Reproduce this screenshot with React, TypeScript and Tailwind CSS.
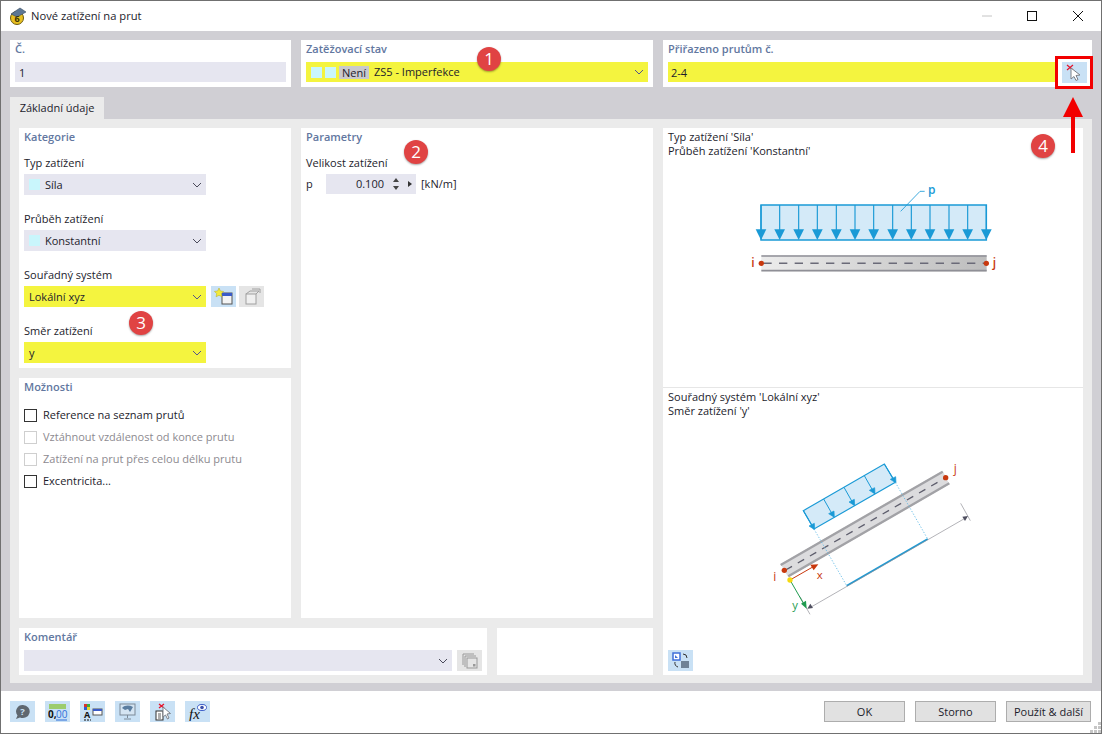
import type { ReactNode } from 'react'

const font = { fontFamily: '"Open Sans", "Noto Sans", sans-serif' }

function Chevron({ color = '#4a4a5a' }: { color?: string }) {
  return (
    <svg width="10" height="6" viewBox="0 0 10 6" className="shrink-0">
      <path d="M1 1l4 4 4-4" fill="none" stroke={color} strokeWidth="1" />
    </svg>
  )
}

function Swatch() {
  return <span className="w-[11px] h-[11px] bg-[#c9f6fc] shrink-0" />
}

function Combo({ text, yellow, swatch }: { text: string; yellow?: boolean; swatch?: boolean }) {
  return (
    <div
      className={`w-[182px] h-[21px] flex items-center pl-[5px] pr-[4px] ${yellow ? 'bg-[#f4f43f]' : 'bg-[#e6e6f0]'}`}
    >
      {swatch && <Swatch />}
      <span className={`flex-1 pt-[1px] text-[#1c1c2c] ${swatch ? 'ml-[5px]' : ''}`}>{text}</span>
      <Chevron color={yellow ? '#55558a' : '#4a4a5a'} />
    </div>
  )
}

function SectionTitle({ children }: { children: ReactNode }) {
  return <div className="h-[18px] leading-[18px] font-semibold text-[#62779f]">{children}</div>
}

function Field({ label, children }: { label: string; children: ReactNode }) {
  return (
    <div className="h-[56px] flex flex-col justify-end">
      <div className="h-[18px] leading-[14px] text-[#1c1c2c]">{label}</div>
      {children}
    </div>
  )
}

function Check({ label, disabled }: { label: string; disabled?: boolean }) {
  return (
    <div className="h-[22px] flex items-center gap-[6px]">
      <span
        className={`w-[13px] h-[13px] border bg-white ${disabled ? 'border-[#cfcfcf]' : 'border-[#333333]'}`}
      />
      <span className={disabled ? 'text-[#8d8a90]' : 'text-[#1c1c2c]'}>{label}</span>
    </div>
  )
}

function IconButton({ children, gray }: { children: ReactNode; gray?: boolean }) {
  return (
    <div
      className={`w-[25px] h-[21px] flex items-center justify-center shrink-0 ${gray ? 'bg-[#e5e5e5]' : 'bg-[#c9e1f5]'}`}
    >
      {children}
    </div>
  )
}

function Cursor({ cross = true }: { cross?: boolean }) {
  return (
    <svg width="19" height="18" viewBox="0 0 19 18">
      {cross && <path d="M2 1l6 5M8 1L2 6" stroke="#e5122a" strokeWidth="1.2" />}
      <path d="M6 4l0 11 3-2.500 2 4 2-1-2-4 4-.5z" fill="#fff" stroke="#7c8088" strokeWidth="1" />
    </svg>
  )
}

function DialogButton({ children, width }: { children: ReactNode; width: string }) {
  return (
    <button className={`${width} h-[21px] bg-[#e1e1e1] border border-[#adadad] text-[#1c1c2c] leading-none`}>
      {children}
    </button>
  )
}

function Badge({ n, className }: { n: number; className: string }) {
  return (
    <div
      className={`absolute w-[24px] h-[24px] rounded-full bg-[#e04343] text-white text-[17px] leading-[24px] text-center shadow-[0_1px_2px_rgba(0,0,0,0.35)] ${className}`}
    >
      {n}
    </div>
  )
}

function LoadDiagram() {
  const xs = [93, 149, 206, 262, 319, 375, 431, 488, 544, 600, 657, 713, 769]
  return (
    <svg width="280" height="110" viewBox="0 0 840 330" className="block">
      <rect x="93" y="75" width="676" height="105" fill="#d4eaf8" stroke="#1a9ad6" strokeWidth="4.500" />
      {xs.map((x) => (
        <g key={x}>
          <path d={`M${x} 75V155`} stroke="#1a9ad6" strokeWidth="3.500" />
          <path d={`M${x - 16} 148h32l-16 32z`} fill="#1a9ad6" />
        </g>
      ))}
      <path d="M512 94l58-60h14" fill="none" stroke="#1a9ad6" strokeWidth="2.500" />
      <text x="594" y="42" fontSize="36" fontWeight="600" fill="#1a9ad6" fontFamily="Open Sans">
        p
      </text>
      <defs>
        <linearGradient id="beam" x1="0" x2="1">
          <stop offset="0" stopColor="#ececec" />
          <stop offset="1" stopColor="#bdbdbd" />
        </linearGradient>
      </defs>
      <rect x="94" y="226" width="676" height="48" fill="url(#beam)" />
      <path d="M94 228H770M94 272H770" stroke="#8f8f96" strokeWidth="5" />
      <path d="M100 250H770" stroke="#6a6a78" strokeWidth="4.500" strokeDasharray="25 22" />
      <circle cx="94" cy="250" r="8" fill="#c8380e" />
      <circle cx="769" cy="250" r="8" fill="#c8380e" />
      <text x="64" y="262" fontSize="36" fontWeight="600" fill="#c8380e" fontFamily="Open Sans">
        i
      </text>
      <text x="788" y="262" fontSize="36" fontWeight="600" fill="#c8380e" fontFamily="Open Sans">
        j
      </text>
    </svg>
  )
}

function AxisDiagram() {
  const dividers: [number, number, number, number][] = [
    [160, 182, 192, 237],
    [221, 147, 251, 200],
    [282, 112, 312, 165],
    [343, 77, 373, 130],
    [403, 42, 436, 97],
  ]
  return (
    <svg width="240" height="180" viewBox="0 0 720 540" className="block">
      <path d="M160 182L403 42 436 97 192 237z" fill="#d4eaf8" stroke="#1a9ad6" strokeWidth="3.500" />
      {dividers.map(([x1, y1, x2, y2]) => (
        <g key={x1}>
          <path d={`M${x1} ${y1}L${x2} ${y2}`} stroke="#1a9ad6" strokeWidth="3" />
          <path d={`M${x2 + 2} ${y2 + 2}l-17-11 16-8z`} fill="#1a9ad6" stroke="#1a9ad6" strokeWidth="2" />
        </g>
      ))}
      <path d="M92 342L578 62 598 103 115 382z" fill="#dcdcde" />
      <path d="M92 345L578 65M115 379L598 100" stroke="#a2a2a6" strokeWidth="7" />
      <path d="M107 360L585 84" stroke="#5d5d6c" strokeWidth="4" strokeDasharray="22 20" />
      <path d="M192 237L290 407M436 97L533 267" stroke="#5cb8e6" strokeWidth="2.500" strokeDasharray="4 5" />
      <path d="M290 407L533 267" stroke="#1a9ad6" strokeWidth="5" />
      <path d="M180 473L650 202" stroke="#8d8d94" strokeWidth="2" />
      <path d="M632 160L661 212M150 440L180 493" stroke="#8d8d94" strokeWidth="2" />
      <path d="M172 476l17-2-8-13zM654 198l-17 2 8 13z" fill="#4f4f60" />
      <path d="M120 390L190 350" stroke="#c8380e" strokeWidth="3" />
      <path d="M205 343l-24 1 10 17z" fill="#c8380e" />
      <path d="M120 390L162 463" stroke="#1f9b4f" strokeWidth="3" />
      <path d="M170 476l-2-24-15 9z" fill="#1f9b4f" />
      <circle cx="103" cy="361" r="8" fill="#c8380e" />
      <circle cx="587" cy="83" r="8" fill="#c8380e" />
      <circle cx="120" cy="390" r="8" fill="#f5d90f" />
      <text x="70" y="393" fontSize="36" fill="#c8380e" fontFamily="Open Sans">i</text>
      <text x="611" y="68" fontSize="36" fill="#c8380e" fontFamily="Open Sans">j</text>
      <text x="200" y="386" fontSize="34" fill="#c8380e" fontFamily="Open Sans">x</text>
      <text x="127" y="478" fontSize="34" fill="#1f9b4f" fontFamily="Open Sans">y</text>
    </svg>
  )
}

export default function App() {
  return (
    <div
      style={font}
      className="relative w-[1102px] h-[734px] flex flex-col bg-white border border-[#707070] text-[11px] overflow-hidden"
    >
      {/* title bar */}
      <div className="h-[30px] flex items-center shrink-0">
        <svg width="18" height="18" viewBox="0 0 18 18" className="ml-[8px]">
          <circle cx="8" cy="11" r="6.500" fill="#e8c021" stroke="#6b5a10" />
          <path d="M2 7l9-6 6 4-9 5z" fill="#5c7796" stroke="#36485e" strokeWidth=".6" />
          <text x="5.500" y="15" fontSize="9" fontWeight="700" fill="#3a3206" fontFamily="Open Sans">6</text>
        </svg>
        <span className="ml-[4px] text-[11.2px] text-[#1c1c2c] flex-1">Nové zatížení na prut</span>
        <svg width="120" height="12" viewBox="0 0 120 12" className="mr-[18px]">
          <path d="M19 6h10" stroke="#c4c4c4" />
          <rect x="64.500" y="1.500" width="9" height="9" fill="none" stroke="#111" />
          <path d="M110 1l10 10M120 1l-10 10" stroke="#111" />
        </svg>
      </div>

      {/* grey working area */}
      <div className="flex-1 bg-[#d0cfd4] px-[9px] pt-[9px] pb-[8px] flex flex-col">
        <div className="flex gap-[10px] h-[47px]">
          <div className="w-[281px] bg-white px-[5px]">
            <SectionTitle>Č.</SectionTitle>
            <div className="mt-[4px] h-[20px] bg-[#e6e6f0] pl-[4px] leading-[21px] text-[#1c1c2c]">1</div>
          </div>
          <div className="w-[352px] bg-white px-[5px]">
            <SectionTitle>Zatěžovací stav</SectionTitle>
            <div className="mt-[4px] h-[20px] bg-[#f4f43f] pl-[5px] pr-[4px] flex items-center text-[#1c1c2c]">
              <Swatch />
              <span className="ml-[3px] flex">
                <Swatch />
              </span>
              <span className="ml-[3px] px-[3px] h-[13px] leading-[13px] bg-[#c9c9cd]">Není</span>
              <span className="ml-[5px] flex-1 pt-[1px]">ZS5 - Imperfekce</span>
              <Chevron color="#55558a" />
            </div>
          </div>
          <div className="w-[429px] bg-white px-[5px]">
            <SectionTitle>Přiřazeno prutům č.</SectionTitle>
            <div className="mt-[4px] h-[21px] flex">
              <div className="w-[387px] h-[20px] bg-[#f4f43f] pl-[3px] leading-[21px] text-[#1c1c2c]">2-4</div>
              <div className="ml-[7px]">
                <IconButton>
                  <Cursor />
                </IconButton>
              </div>
            </div>
          </div>
        </div>

        <div className="mt-[10px] h-[22px] w-[94px] bg-[#ebebeb] flex items-center justify-center text-[#1c1c2c]">
          Základní údaje
        </div>

        <div className="flex-1 bg-[#ebebeb] p-[9px] pb-[8px] flex gap-[10px]">
          <div className="w-[634px] flex flex-col gap-[10px]">
            <div className="flex-1 flex gap-[10px]">
              <div className="w-[272px] flex flex-col gap-[10px]">
                <div className="h-[240px] bg-white px-[5px] pt-0">
                  <SectionTitle>Kategorie</SectionTitle>
                  <div className="-mt-[7px]">
                    <Field label="Typ zatížení">
                      <Combo text="Síla" swatch />
                    </Field>
                    <Field label="Průběh zatížení">
                      <Combo text="Konstantní" swatch />
                    </Field>
                    <Field label="Souřadný systém">
                      <div className="flex">
                        <Combo text="Lokální xyz" yellow />
                        <div className="ml-[5px] flex gap-[3px]">
                          <IconButton>
                            <svg width="20" height="17" viewBox="0 0 20 17">
                              <rect x="8" y="5" width="10" height="11" fill="#f4f4f4" stroke="#555" />
                              <rect x="8" y="5" width="10" height="3" fill="#3a5bc8" />
                              <path d="M5 0l1.400 3 3.200.4-2.300 2.200.6 3.200L5 7.300 2.100 8.800l.6-3.200L.4 3.400 3.600 3z" fill="#f2ea3c" stroke="#b5ad20" strokeWidth=".5" />
                            </svg>
                          </IconButton>
                          <IconButton gray>
                            <svg width="20" height="17" viewBox="0 0 20 17">
                              <rect x="4" y="6" width="10" height="10" fill="#f0f0f0" stroke="#a0a0a0" />
                              <path d="M4 6l4-3h9l-3 3M10 1h8v4" fill="none" stroke="#a0a0a0" />
                            </svg>
                          </IconButton>
                        </div>
                      </div>
                    </Field>
                    <Field label="Směr zatížení">
                      <Combo text="y" yellow />
                    </Field>
                  </div>
                </div>
                <div className="flex-1 bg-white px-[5px]">
                  <SectionTitle>Možnosti</SectionTitle>
                  <div className="mt-[8px]">
                    <Check label="Reference na seznam prutů" />
                    <Check label="Vztáhnout vzdálenost od konce prutu" disabled />
                    <Check label="Zatížení na prut přes celou délku prutu" disabled />
                    <Check label="Excentricita..." />
                  </div>
                </div>
              </div>
              <div className="w-[352px] bg-white px-[5px]">
                <SectionTitle>Parametry</SectionTitle>
                <div className="mt-[9px] h-[16px] leading-[16px] text-[#1c1c2c]">Velikost zatížení</div>
                <div className="mt-[3px] h-[20px] flex items-center text-[#1c1c2c]">
                  <span className="w-[20px]">p</span>
                  <div className="w-[90px] h-[20px] bg-[#e6e6f0] flex items-center justify-end pr-[2px]">
                    <span>0.100</span>
                    <svg width="27" height="14" viewBox="0 0 27 14" className="ml-[3px]">
                      <path d="M6 5l3-4 3 4zM6 9l3 4 3-4z" fill="#444" />
                      <path d="M21 4l4 3-4 3z" fill="#333" />
                    </svg>
                  </div>
                  <span className="ml-[5px]">[kN/m]</span>
                </div>
              </div>
            </div>
            <div className="h-[47px] flex gap-[10px]">
              <div className="w-[468px] bg-white px-[5px]">
                <SectionTitle>Komentář</SectionTitle>
                <div className="mt-[4px] flex gap-[5px]">
                  <div className="w-[428px] h-[21px] bg-[#e6e6f0] flex items-center justify-end pr-[4px]">
                    <Chevron />
                  </div>
                  <IconButton gray>
                    <svg width="16" height="16" viewBox="0 0 16 16">
                      <path d="M1 12V1h11M3 14V3h11" fill="none" stroke="#999" />
                      <rect x="5" y="5" width="10" height="10" fill="#e5e5e5" stroke="#999" />
                      <rect x="11" y="11" width="2.500" height="2.500" fill="#999" />
                    </svg>
                  </IconButton>
                </div>
              </div>
              <div className="w-[156px] bg-white" />
            </div>
          </div>

          <div className="w-[420px] bg-white flex flex-col">
            <div className="h-[260px] border-b border-[#e6e6e6] px-[5px] pt-[2px] leading-[14px] text-[#1c1c2c]">
              <div>Typ zatížení 'Síla'</div>
              <div>Průběh zatížení 'Konstantní'</div>
              <div className="ml-[62px] mt-[22px]">
                <LoadDiagram />
              </div>
            </div>
            <div className="flex-1 px-[5px] pt-[2px] leading-[14px] text-[#1c1c2c] flex flex-col">
              <div>Souřadný systém 'Lokální xyz'</div>
              <div>Směr zatížení 'y'</div>
              <div className="ml-[82px] mt-[32px]">
                <AxisDiagram />
              </div>
              <div className="mt-auto mb-[4px]">
                <IconButton>
                  <svg width="18" height="17" viewBox="0 0 18 17">
                    <rect x="1" y="1" width="7" height="7" fill="#fff" stroke="#3f6fd8" strokeWidth="1.500" />
                    <path d="M3 6V3l2 2 1 1z" fill="#3f6fd8" />
                    <rect x="9" y="9" width="8" height="7" fill="#6f8296" />
                    <path d="M11 2a4 4 0 0 1 4 4M3 10a4 4 0 0 0 3 5" fill="none" stroke="#333" />
                  </svg>
                </IconButton>
              </div>
            </div>
          </div>
        </div>
      </div>

      {/* bottom toolbar */}
      <div className="h-[42px] shrink-0 flex items-start pt-[10px] pl-[9px] pr-[10px] relative">
        <div className="flex gap-[10px]">
          <IconButton>
            <svg width="16" height="16" viewBox="0 0 16 16">
              <path d="M8 1a7 6.500 0 1 1-3 12.500L1 15l1.500-3.500A6.500 6.500 0 0 1 8 1z" fill="#5f6770" />
              <text x="5.200" y="11" fontSize="9.500" fontWeight="700" fill="#c9e1f5" fontFamily="Open Sans">?</text>
            </svg>
          </IconButton>
          <IconButton>
            <svg width="20" height="18" viewBox="0 0 20 18">
              <rect x="1" y="1" width="17" height="5" fill="#9ccc6c" />
              <text x="0" y="15" fontSize="10" fontWeight="700" fill="#111" fontFamily="Open Sans">0,</text>
              <text x="8" y="15" fontSize="10" fill="#2f6fd8" fontFamily="Open Sans">00</text>
              <path d="M8 17h11" stroke="#2f6fd8" />
            </svg>
          </IconButton>
          <IconButton>
            <svg width="20" height="18" viewBox="0 0 20 18">
              <rect x="1" y="1" width="3" height="3" fill="#d9342b" />
              <rect x="4" y="1" width="3" height="3" fill="#3cae3c" />
              <rect x="1" y="4" width="3" height="3" fill="#2f5fd0" />
              <rect x="4" y="4" width="3" height="3" fill="#e8d82c" />
              <text x="1" y="15" fontSize="9" fontWeight="700" fill="#111" fontFamily="Open Sans">A</text>
              <path d="M1 17h2M4 17h2M7 17h1" stroke="#111" />
              <rect x="10" y="6" width="9" height="6" fill="#fff" stroke="#555" />
              <rect x="10" y="6" width="9" height="2" fill="#3a5bc8" />
            </svg>
          </IconButton>
          <IconButton>
            <svg width="18" height="17" viewBox="0 0 18 17">
              <rect x="1" y="1" width="15" height="11" fill="#d4e4f2" stroke="#7c8a98" />
              <path d="M3 5c3-3 7-3 11-1l-3 5-2-3-3 1z" fill="#5a7da0" />
              <path d="M8.500 12v3M5 16h7" stroke="#7c8a98" />
            </svg>
          </IconButton>
          <IconButton>
            <svg width="19" height="18" viewBox="0 0 19 18">
              <rect x="3" y="8" width="7" height="9" fill="#fff" stroke="#333" />
              <path d="M5 11h3M5 13h3M5 15h3" stroke="#333" strokeWidth=".8" />
              <path d="M6 1l5 4M11 1L6 5" stroke="#e5122a" strokeWidth="1.300" />
              <path d="M10 4v10l2.500-2 2 4 1.500-1-2-4 3.500-.5z" fill="#fff" stroke="#7c8088" />
            </svg>
          </IconButton>
          <IconButton>
            <svg width="20" height="18" viewBox="0 0 20 18">
              <text x="1" y="16" fontSize="15" fontStyle="italic" fontFamily="Liberation Serif" fill="#111">
                fx
              </text>
              <ellipse cx="14" cy="4.500" rx="4.500" ry="3" fill="#fff" stroke="#3a5bc8" />
              <circle cx="14" cy="4.500" r="1.800" fill="#3a4fa8" />
            </svg>
          </IconButton>
        </div>
        <div className="ml-auto flex gap-[10px]">
          <DialogButton width="w-[81px]">OK</DialogButton>
          <DialogButton width="w-[81px]">Storno</DialogButton>
          <DialogButton width="w-[85px]">Použít &amp; další</DialogButton>
        </div>
        <svg width="11" height="11" viewBox="0 0 11 11" className="absolute right-0 bottom-0">
          <path d="M8 0h3v3H8zM4 4h3v3H4zM8 4h3v3H8zM0 8h3v3H0zM4 8h3v3H4zM8 8h3v3H8z" fill="#c6c6c6" />
        </svg>
      </div>

      {/* callouts drawn over the dialog */}
      <Badge n={1} className="left-[476px] top-[46px]" />
      <Badge n={2} className="left-[403px] top-[139px]" />
      <Badge n={3} className="left-[128px] top-[310px]" />
      <Badge n={4} className="left-[1030px] top-[133px]" />
      <div className="absolute left-[1054px] top-[55px] w-[38px] h-[33px] border-[3px] border-[#f20000]" />
      <svg width="20" height="58" viewBox="0 0 20 58" className="absolute left-[1062px] top-[96px]">
        <path d="M10 0l10 20h-8v36H8V20H0z" fill="#f20000" />
      </svg>
    </div>
  )
}
